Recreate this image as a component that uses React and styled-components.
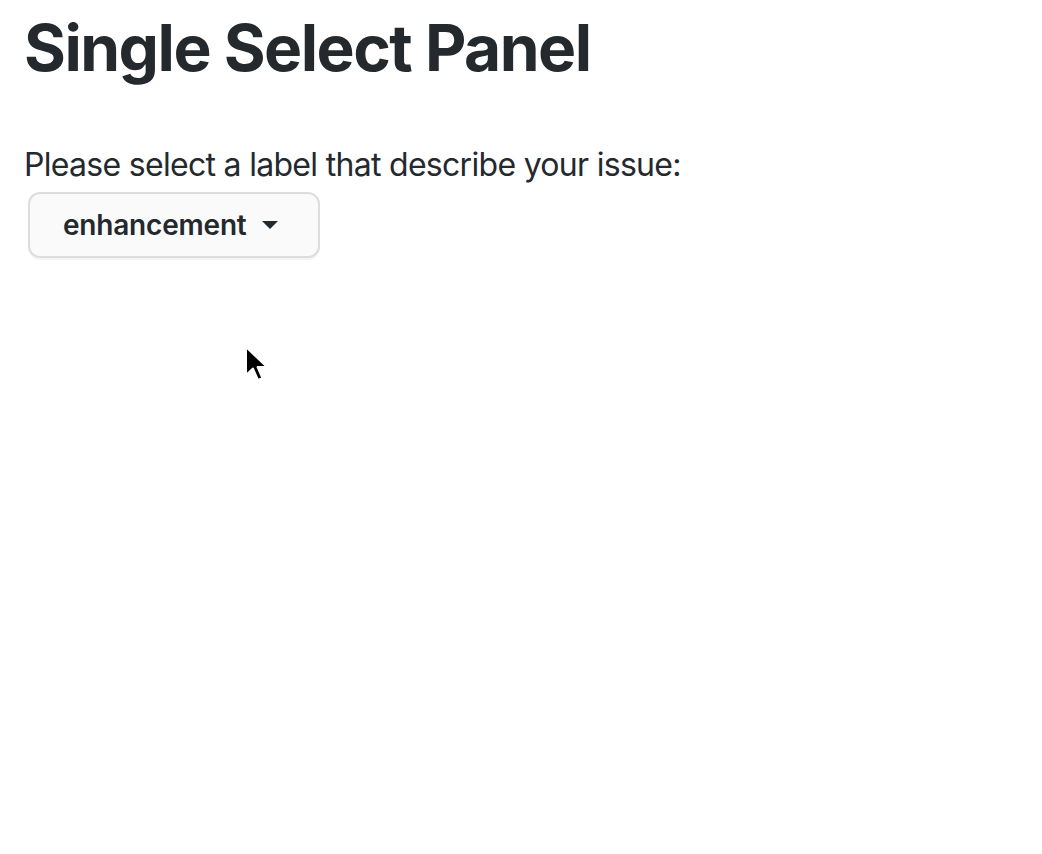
import React from "react";
import styled, { createGlobalStyle } from "styled-components";

const GlobalStyle = createGlobalStyle`
  html, body {
    margin: 0;
    padding: 0;
    background: #fff;
  }
  body {
    font-family: Inter, "Liberation Sans", sans-serif;
    color: #24292e;
  }
`;

const Page = styled.div`
  position: relative;
  width: 1042px;
  height: 854px;
  box-sizing: border-box;
  padding: 8px 24px;
`;

const Title = styled.h1`
  margin: 0 0 53px;
  font-size: 64px;
  line-height: 80px;
  font-weight: 700;
  letter-spacing: -1.5px;
`;

const Prompt = styled.p`
  margin: 0 0 3px;
  font-size: 32px;
  line-height: 48px;
  font-weight: 400;
  letter-spacing: -0.7px;
`;

const SelectButton = styled.button`
  display: inline-flex;
  align-items: center;
  gap: 15px;
  margin-left: 4px;
  height: 66px;
  padding: 0 40px 0 33px;
  box-sizing: border-box;
  background: #fafafa;
  border: 2px solid #dddddd;
  border-radius: 12px;
  box-shadow: 0 2px 0 rgba(0, 0, 0, 0.04);
  font-family: inherit;
  font-size: 28px;
  font-weight: 600;
  letter-spacing: -0.2px;
  color: #24292e;
  cursor: pointer;
`;

const Caret = styled.span`
  display: inline-block;
  width: 0;
  height: 0;
  border-left: 8px solid transparent;
  border-right: 8px solid transparent;
  border-top: 8px solid #24292e;
`;

const Cursor = styled.svg`
  position: absolute;
  left: 244px;
  top: 345px;
`;

export default function App() {
  return (
    <Page>
      <GlobalStyle />
      <Title>Single Select Panel</Title>
      <Prompt>Please select a label that describe your issue:</Prompt>
      <SelectButton>
        enhancement
        <Caret />
      </SelectButton>
      <Cursor width="28" height="38" viewBox="0 0 14 19">
        <path
          d="M1 1 L1 15 L4.5 11.8 L7 17.5 L9.2 16.6 L6.8 11 L11.5 11 Z"
          fill="#000"
          stroke="#fff"
          strokeWidth="1"
          strokeLinejoin="round"
        />
      </Cursor>
    </Page>
  );
}
